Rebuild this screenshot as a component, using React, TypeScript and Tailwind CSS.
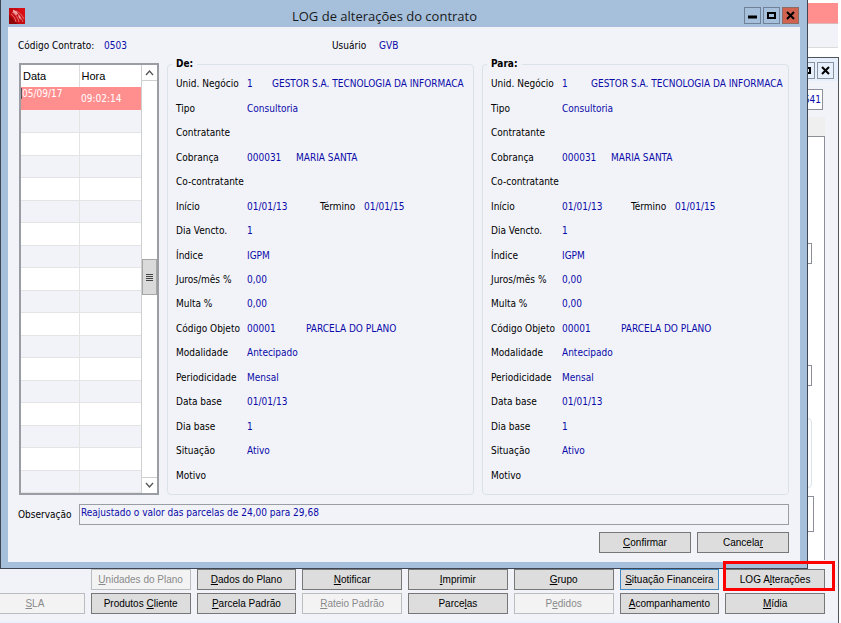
import React from "react";
import clsx from "clsx";

interface Action {
  label: string;
  hotkey: number; // posição da letra sublinhada
  disabled?: boolean;
  focused?: boolean;
  highlighted?: boolean;
}

interface Field {
  label: string;
  value?: string;
  extra?: string;
  extraLabel?: string;
  codeWidth?: string;
}

const topActions: Action[] = [
  { label: "Unidades do Plano", hotkey: 0, disabled: true },
  { label: "Dados do Plano", hotkey: 0 },
  { label: "Notificar", hotkey: 0 },
  { label: "Imprimir", hotkey: 0 },
  { label: "Grupo", hotkey: 0 },
  { label: "Situação Financeira", hotkey: 0, focused: true },
  { label: "LOG Alterações", hotkey: 5, highlighted: true },
];

const bottomActions: Action[] = [
  { label: "SLA", hotkey: 0, disabled: true },
  { label: "Produtos Cliente", hotkey: 9 },
  { label: "Parcela Padrão", hotkey: 0 },
  { label: "Rateio Padrão", hotkey: 0, disabled: true },
  { label: "Parcelas", hotkey: 5 },
  { label: "Pedidos", hotkey: 1, disabled: true },
  { label: "Acompanhamento", hotkey: 0 },
  { label: "Mídia", hotkey: 0 },
];

const fields: Field[] = [
  {
    label: "Unid. Negócio",
    value: "1",
    extra: "GESTOR S.A. TECNOLOGIA DA INFORMACA",
    codeWidth: "w-[25px]",
  },
  { label: "Tipo", value: "Consultoria" },
  { label: "Contratante" },
  { label: "Cobrança", value: "000031", extra: "MARIA SANTA", codeWidth: "w-[49px]" },
  { label: "Co-contratante" },
  {
    label: "Início",
    value: "01/01/13",
    extraLabel: "Término",
    extra: "01/01/15",
    codeWidth: "w-[73px]",
  },
  { label: "Dia Vencto.", value: "1" },
  { label: "Índice", value: "IGPM" },
  { label: "Juros/mês %", value: "0,00" },
  { label: "Multa %", value: "0,00" },
  { label: "Código Objeto", value: "00001", extra: "PARCELA DO PLANO", codeWidth: "w-[59px]" },
  { label: "Modalidade", value: "Antecipado" },
  { label: "Periodicidade", value: "Mensal" },
  { label: "Data base", value: "01/01/13" },
  { label: "Dia base", value: "1" },
  { label: "Situação", value: "Ativo" },
  { label: "Motivo" },
];

// No grupo "Para" duas linhas usam colunas diferentes
const paraWidths: Record<string, string> = {
  "Unid. Negócio": "w-[29px]",
  Início: "w-[69px]",
};

const paraFields = fields.map((f) => ({
  ...f,
  codeWidth: paraWidths[f.label] ?? f.codeWidth,
}));

const emptyRows = Array.from({ length: 17 }, (_, i) => i + 1);

function ActionButton({ label, hotkey, disabled, focused }: Action) {
  return (
    <button
      type="button"
      disabled={disabled}
      className={clsx(
        "h-[21px] w-full whitespace-nowrap border text-center font-['Liberation_Sans',sans-serif] text-[10px] leading-4",
        disabled && "border-[#bcbdc0] bg-[#f3f3f4] text-[#8a8a8a]",
        !disabled && "bg-[#dddddd] text-black",
        !disabled && (focused ? "border-[#3f8ac4]" : "border-[#777777]")
      )}
    >
      {label.slice(0, hotkey)}
      <span className="underline">{label[hotkey]}</span>
      {label.slice(hotkey + 1)}
    </button>
  );
}

function AppIcon() {
  return (
    <svg viewBox="0 0 16 16" className="size-4" aria-hidden="true">
      <rect width="16" height="16" fill="#c40a10" />
      <path d="M8 0h8v13z" fill="#d80f14" />
      <path d="M0 7l9 9H0z" fill="#8f0508" />
      <path
        d="M4 2c4 2 8 7 10 12M3 4c4 2 6 6 7 10M2 6c3 2 4 4 5 8M7 3c3 1 6 4 8 8"
        fill="none"
        stroke="#f3a09b"
        strokeWidth="0.7"
      />
      <path d="M4 2l3 1 2 3-2 1-3-3zM9 7l2 1 1 4-2-2z" fill="#ffd9d4" opacity="0.7" />
    </svg>
  );
}

function WindowButton({
  kind,
  className,
}: {
  kind: "Minimizar" | "Maximizar" | "Fechar";
  className: string;
}) {
  return (
    <button
      type="button"
      aria-label={kind}
      className={clsx("flex size-[17px] items-center justify-center border", className)}
    >
      <svg viewBox="0 0 11 11" className="size-[11px] shrink-0" fill="none" stroke="#000" strokeWidth="2">
        {kind === "Minimizar" && <path d="M1 7h9" strokeWidth="3" />}
        {kind === "Maximizar" && <path d="M2 3h7v5H2z" />}
        {kind === "Fechar" && <path d="M2 2l7 7M9 2l-7 7" />}
      </svg>
    </button>
  );
}

function HistoryTable() {
  return (
    <div className="mt-[6px] flex w-[140px] shrink-0 self-start border-2 border-[#9a9da3] bg-white">
      <table className="flex-1 table-fixed border-collapse self-start text-left">
        <thead>
          <tr className="h-[22px] font-['Liberation_Sans',sans-serif] text-[11px] leading-4 text-black">
            <th className="w-[58px] border-r border-[#dcdcdc] p-0 pl-0.5 font-normal">Data</th>
            <th className="p-0 pl-0.5 font-normal">Hora</th>
          </tr>
        </thead>
        <tbody>
          <tr className="h-[23px] bg-[#ff8f8f] text-white">
            <td className="p-0 align-top">
              <span className="border-l border-[#555]">05/09/17</span>
            </td>
            <td className="p-0 pl-0.5">09:02:14</td>
          </tr>
          {emptyRows.map((n) => (
            <tr
              key={n}
              className={clsx(
                "border-b border-[#e4e4e4]",
                n % 2 ? "h-[22px] bg-[#f2f3f9]" : "h-[23px] bg-white"
              )}
            >
              <td className="border-r border-[#e4e4e4] p-0" />
              <td className="p-0" />
            </tr>
          ))}
        </tbody>
      </table>
      {/* Barra de rolagem */}
      <div className="flex w-4 flex-col border-l border-[#cfcfcf] bg-white">
        <button
          type="button"
          aria-label="Rolar para cima"
          className="flex h-4 items-center justify-center border-b border-[#cfcfcf]"
        >
          <svg viewBox="0 0 9 6" className="h-1.5 w-[9px]" fill="none" stroke="#555" strokeWidth="1.3">
            <path d="M1 5l3.5-4L8 5" />
          </svg>
        </button>
        <div className="h-[178px]" />
        <div className="flex h-9 flex-col items-center justify-center gap-px border border-[#a6a6a6] bg-[#dadada]">
          <span className="h-px w-[7px] bg-[#444]" />
          <span className="h-px w-[7px] bg-[#444]" />
          <span className="h-px w-[7px] bg-[#444]" />
          <span className="h-px w-[7px] bg-[#444]" />
        </div>
        <div className="flex-1" />
        <button
          type="button"
          aria-label="Rolar para baixo"
          className="flex h-4 items-center justify-center border-t border-[#cfcfcf]"
        >
          <svg viewBox="0 0 9 6" className="h-1.5 w-[9px]" fill="none" stroke="#555" strokeWidth="1.3">
            <path d="M1 1l3.5 4L8 1" />
          </svg>
        </button>
      </div>
    </div>
  );
}

function FieldGroup({ title, items }: { title: string; items: Field[] }) {
  return (
    <fieldset className="flex min-w-0 flex-1 flex-col rounded border border-[#dbe3ea] pb-1.5 pl-1">
      <legend className="px-1 font-bold leading-[14px] text-black">{title}</legend>
      <dl className="mt-px grid h-[416px] auto-rows-fr pl-1 pr-0.5">
        {items.map((f) => (
          <div key={f.label} className="flex items-center whitespace-nowrap">
            <dt className="w-[71px] shrink-0 text-black">{f.label}</dt>
            <dd className="flex min-w-0 text-[#0a0aa8]">
              <span className={clsx("shrink-0", f.codeWidth)}>{f.value}</span>
              {f.extraLabel && <span className="w-11 shrink-0 text-black">{f.extraLabel}</span>}
              {f.extra && <span>{f.extra}</span>}
            </dd>
          </div>
        ))}
      </dl>
    </fieldset>
  );
}

function LogDialog() {
  return (
    <section
      role="dialog"
      aria-labelledby="log-title"
      className="absolute left-0 right-[33px] top-0 z-10 border-x border-b border-[#3d4652] bg-[#a6c0dc] px-[7px] pb-[6px]"
    >
      <header className="flex h-[27px] items-center pl-px pr-px pt-1">
        <AppIcon />
        <h1
          id="log-title"
          className="flex-1 text-center font-['Open_Sans',sans-serif] text-[13px] leading-5 text-[#1a1a1a]"
        >
          LOG de alterações do contrato
        </h1>
        <div className="flex gap-0.5">
          <WindowButton kind="Minimizar" className="border-[#6f8299] bg-[#a6c0dc]" />
          <WindowButton kind="Maximizar" className="border-[#6f8299] bg-[#a6c0dc]" />
          <WindowButton kind="Fechar" className="border-[#8c6a66] bg-[#d0624f]" />
        </div>
      </header>

      <div className="bg-[#f2f3f9] pb-[9px] pl-[10px] pr-[11px] pt-[10px]">
        <div className="flex h-4 items-center whitespace-nowrap pt-px">
          <span className="w-[86px]">Código Contrato:</span>
          <span className="w-[228px] text-[#0a0aa8]">0503</span>
          <span className="w-[47px]">Usuário</span>
          <span className="text-[#0a0aa8]">GVB</span>
        </div>

        <div className="mt-1 flex gap-2 pl-px">
          <HistoryTable />
          <FieldGroup title="De:" items={fields} />
          <FieldGroup title="Para:" items={paraFields} />
        </div>

        <div className="mt-[9px] flex items-center">
          <label htmlFor="observacao" className="w-[61px]">
            Observação
          </label>
          <input
            id="observacao"
            readOnly
            defaultValue="Reajustado o valor das parcelas de 24,00 para 29,68"
            className="h-[21px] min-w-0 flex-1 border border-[#9a9da3] pb-1 pl-px text-[#0a0aa8]"
          />
        </div>

        <div className="mt-[7px] flex justify-end gap-[6px]">
          <div className="w-[92px]">
            <ActionButton label="Confirmar" hotkey={0} />
          </div>
          <div className="w-[92px]">
            <ActionButton label="Cancelar" hotkey={7} />
          </div>
        </div>
      </div>
    </section>
  );
}

function ContractWindow() {
  return (
    <section className="mr-0.5 border-r border-t border-[#50555c] bg-[#f2f3f9]">
      <header className="flex h-[23px] items-center justify-end gap-0.5 bg-[#e6effc] pr-1 pt-px">
        <WindowButton kind="Maximizar" className="border-[#8a94a3] bg-[#e6effc]" />
        <WindowButton kind="Fechar" className="border-[#8a94a3] bg-[#e6effc]" />
      </header>
      <div className="flex flex-col pr-[13px]">
        <input
          aria-label="Contrato"
          readOnly
          defaultValue="641"
          className="mr-0.5 mt-2 h-[21px] w-24 self-end border border-[#8c8f98] bg-white pr-px text-right text-[#0a0aa8]"
        />
        <div className="mt-[7px] h-[19px] bg-[#efefef]" />
        {/* Painel da aba */}
        <div className="flex h-[424px] flex-col border-r border-t border-[#8c8f98] bg-white pr-3">
          <div className="mt-[106px] h-[21px] border border-[#8c8f98]" />
          <div className="mt-[101px] h-[21px] border border-[#8c8f98]" />
          <div className="mt-8 h-[70px] rounded border border-[#dbe3ea]" />
          <div className="-mr-0.5 mt-2 h-9 border border-[#8c8f98]" />
        </div>
        <div className="-ml-[15px] mt-[9px] grid grid-cols-8 gap-x-[6px] gap-y-[3px]">
          <span />
          {topActions.map((a) => (
            <div key={a.label} className="relative">
              <ActionButton {...a} />
              {a.highlighted && (
                <span className="pointer-events-none absolute -bottom-px -left-0.5 -right-2.5 -top-2 z-20 border-[3px] border-[#ff0000]" />
              )}
            </div>
          ))}
          {bottomActions.map((a) => (
            <ActionButton key={a.label} {...a} />
          ))}
        </div>
      </div>
      <div className="mt-2 h-0.5 bg-[#e6effc]" />
    </section>
  );
}

export default function App() {
  return (
    <main className="relative min-h-screen overflow-hidden bg-white font-['DejaVu_Sans_Condensed',sans-serif] text-[10px] leading-[14px] text-black">
      <div className="mr-[3px] pt-[3px]">
        <div className="h-[21px] border-b border-[#d9b9b9] bg-[#ff8f8f]" />
        <div className="h-6 border-b border-[#dcdcdc] bg-[#f2f3f9]" />
      </div>
      <div className="pt-[9px]">
        <ContractWindow />
      </div>
      <LogDialog />
    </main>
  );
}
